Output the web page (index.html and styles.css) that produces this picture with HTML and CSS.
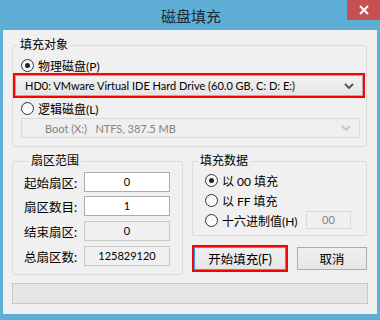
FILE: index.html
```html
<!DOCTYPE html>
<html lang="zh-CN">
<head>
  <meta charset="UTF-8" />
  <title>磁盘填充</title>
  <link rel="stylesheet" href="styles.css">
</head>
<body>
  <div class="window">
    <div class="titlebar">
      <span class="title">磁盘填充</span>
      <span class="close">
        <svg width="10" height="10" viewBox="0 0 10 10"><path d="M1 1 L9 9 M9 1 L1 9" stroke="#fff" stroke-width="2"/></svg>
      </span>
    </div>

    <div class="client">
      <fieldset class="group target">
        <legend>填充对象</legend>
        <label class="radio"><span class="dot checked"></span>物理磁盘(P)</label>
        <div class="mark">
          <div class="combo">
            <span>HD0: VMware Virtual IDE Hard Drive (60.0 GB, C: D: E:)</span>
            <svg width="10" height="6" viewBox="0 0 10 6"><path d="M1 1 L5 5 L9 1" fill="none" stroke="#555" stroke-width="2"/></svg>
          </div>
        </div>
        <label class="radio"><span class="dot"></span>逻辑磁盘(L)</label>
        <div class="combo disabled">
          <span>Boot (X:)&nbsp;&nbsp; NTFS, 387.5 MB</span>
          <svg width="10" height="6" viewBox="0 0 10 6"><path d="M1 1 L5 5 L9 1" fill="none" stroke="#c4c4c4" stroke-width="2"/></svg>
        </div>
      </fieldset>

      <div class="columns">
        <fieldset class="group range">
          <legend>扇区范围</legend>
          <div class="row"><span class="lbl">起始扇区:</span><span class="box">0</span></div>
          <div class="row"><span class="lbl">扇区数目:</span><span class="box">1</span></div>
          <div class="row"><span class="lbl">结束扇区:</span><span class="box off">0</span></div>
          <div class="row"><span class="lbl">总扇区数:</span><span class="box off">125829120</span></div>
        </fieldset>

        <div class="right">
          <fieldset class="group data">
            <legend>填充数据</legend>
            <label class="radio"><span class="dot checked"></span>以 00 填充</label>
            <label class="radio"><span class="dot"></span>以 FF 填充</label>
            <div class="hexrow">
              <label class="radio"><span class="dot"></span>十六进制值(H)</label>
              <span class="hex">00</span>
            </div>
          </fieldset>
          <div class="buttons">
            <div class="mark"><button class="btn focus">开始填充(F)</button></div>
            <button class="btn">取消</button>
          </div>
        </div>
      </div>

      <div class="status"></div>
    </div>
  </div>
</body>
</html>
```

FILE: styles.css
```css
body {
  margin: 0;
  font-family: Lato, "Noto Sans CJK SC", sans-serif;
  font-size: 12px;
  color: #000;
}
.window {
  width: 380px;
  height: 320px;
  background-color: #5eaed6;
  padding: 0 3px 6px 3px;
  box-sizing: border-box;
}
.titlebar {
  height: 30px;
  position: relative;
  display: flex;
  justify-content: center;
  align-items: center;
}
.title {
  font-size: 15px;
  color: #1e2a36;
  margin-left: 2px;
}
.close {
  position: absolute;
  top: 0;
  right: -3px;
  width: 33px;
  height: 20px;
  background-color: #c75050;
  display: flex;
  justify-content: center;
  align-items: center;
}
.client {
  background-color: #f0f0f0;
  height: 284px;
  padding: 8px 10px 0 9px;
  box-sizing: border-box;
}
.group {
  margin: 0;
  padding: 0;
  border: 1px solid #dcdcdc;
  border-radius: 2px;
}
.group legend {
  padding: 0 2px;
  margin-left: 5px;
  line-height: 14px;
}
.target {
  padding: 6px 1px 8px 0;
}
.radio {
  display: flex;
  align-items: center;
  height: 14px;
  margin-left: 8px;
}
.dot {
  width: 11px;
  height: 11px;
  border: 1px solid #333;
  border-radius: 50%;
  background: linear-gradient(#f4f4f4, #ffffff);
  margin-right: 4px;
  position: relative;
  flex-shrink: 0;
}
.dot.checked::after {
  content: "";
  position: absolute;
  left: 3px;
  top: 3px;
  width: 5px;
  height: 5px;
  border-radius: 50%;
  background-color: #222;
}
.mark {
  border: 2px solid #f00;
}
.target .mark {
  margin-top: 1px;
}
.combo {
  height: 21px;
  border: 1px solid #acacac;
  background: linear-gradient(#f2f2f2, #e5e5e5);
  display: flex;
  align-items: center;
  justify-content: space-between;
  padding: 0 8px 0 9px;
  box-sizing: border-box;
  font-size: 11px;
}
.target .radio:nth-of-type(2) {
  margin-top: 3px;
}
.combo.disabled {
  height: 20px;
  margin: 3px 5px 0 8px;
  border-color: #d9d9d9;
  background: #efefef;
  color: #838383;
  padding-left: 23px;
}
.columns {
  display: flex;
  gap: 9px;
  margin-top: 7px;
}
.range {
  width: 171px;
  box-sizing: border-box;
  padding: 4px 12px 8px 11px;
  display: flex;
  flex-direction: column;
  gap: 4px;
}
.row {
  display: flex;
  justify-content: space-between;
  align-items: center;
}
.row:nth-of-type(n+3) {
  margin-top: 1px;
}
.lbl {
  font-size: 12.5px;
}
.box {
  width: 86px;
  height: 20px;
  border: 1px solid #abadb3;
  background-color: #fff;
  box-sizing: border-box;
  text-align: center;
  line-height: 18px;
  font-size: 11px;
}
.box.off {
  background-color: #f0f0f0;
  border-color: #c8c8c8;
}
.right {
  width: 175px;
}
.data {
  padding: 2px 0 5px 0;
}
.data .radio {
  height: 20px;
  margin-left: 12px;
}
.hexrow {
  display: flex;
  justify-content: space-between;
  align-items: center;
  padding-right: 15px;
}
.hex {
  width: 45px;
  height: 18px;
  border: 1px solid #d9d9d9;
  box-sizing: border-box;
  text-align: center;
  line-height: 16px;
  color: #838383;
  font-size: 11px;
}
.buttons {
  display: flex;
  justify-content: space-between;
  align-items: flex-start;
  margin-top: 9px;
}
.btn {
  font-family: inherit;
  font-size: 12.5px;
  height: 23px;
  border: 1px solid #acacac;
  background: linear-gradient(#f0f0f0, #e5e5e5);
  padding: 0;
  width: 70px;
  margin-top: 2px;
}
.btn.focus {
  width: 92px;
  margin: 0;
  display: block;
  border-color: #3399ff;
}
.status {
  height: 19px;
  margin-top: 8px;
  margin-right: -1px;
  border: 1px solid #c8c8c8;
  background-color: #e6e6e6;
}
```
